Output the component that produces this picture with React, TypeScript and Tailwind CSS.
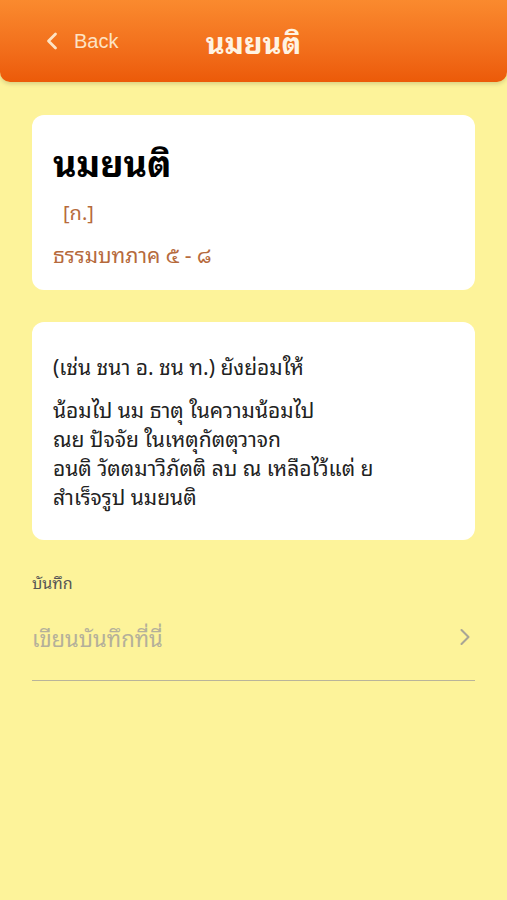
import { ChevronLeft, ChevronRight } from "lucide-react";

export default function App() {
  return (
    <div
      className="min-h-[900px] w-full bg-[#fdf39a] text-black"
      style={{
        fontFamily:
          '"Noto Sans Thai Looped", "Loma", "Garuda", "Tlwg Typo", "Norasi", "Noto Sans Thai", "Noto Sans", sans-serif',
      }}
    >
      {/* Header */}
      <div className="relative flex h-[82px] items-center rounded-b-[10px] bg-gradient-to-b from-[#fa8a2e] to-[#ec5a08] shadow-[0_2px_4px_rgba(0,0,0,0.15)]">
        <div className="absolute left-[38px] top-[26px] flex items-center gap-[8px] text-[#fde3c4]">
          <ChevronLeft size={28} strokeWidth={2.4} />
          <span className="text-[20px]" style={{ fontFamily: '"Liberation Sans", sans-serif' }}>Back</span>
        </div>
        <div className="w-full pt-[2px] text-center text-[29px] font-bold text-[#fff3e2]">นมยนติ</div>
      </div>

      <div className="flex flex-col px-[32px] pt-[33px]">
        {/* Word card */}
        <div className="flex h-[175px] flex-col rounded-[12px] bg-white px-[21px] pt-[21px]">
          <div className="text-[36px] font-bold leading-[50px]">นมยนติ</div>
          <div className="mt-[11px] pl-[10px] text-[20px] leading-[28px] text-[#b66a3c]">[ก.]</div>
          <div className="mt-[14px] text-[21px] leading-[30px] text-[#b66a3c]">ธรรมบทภาค ๕ - ๘</div>
        </div>

        {/* Meaning card */}
        <div className="mt-[32px] flex h-[218px] flex-col rounded-[12px] bg-white px-[21px] pt-[29px] text-[21px] leading-[29px] text-[#222]">
          <div>(เช่น ชนา อ. ชน ท.) ยังย่อมให้</div>
          <div className="mt-[14px]">
            <div>น้อมไป นม ธาตุ ในความน้อมไป</div>
            <div>ณย ปัจจัย ในเหตุกัตตุวาจก</div>
            <div>อนติ วัตตมาวิภัตติ ลบ ณ เหลือไว้แต่ ย</div>
            <div>สำเร็จรูป นมยนติ</div>
          </div>
        </div>

        {/* Note */}
        <div className="mt-[30px] text-[16px] leading-[24px] text-[#555]">บันทึก</div>
        <div className="mt-[28px] flex items-center justify-between border-b border-[#b9b49a] pb-[28px]">
          <span className="text-[22px] leading-[30px] text-[#b4b09a]">เขียนบันทึกที่นี่</span>
          <ChevronRight size={28} strokeWidth={1.8} className="mr-[-4px] text-[#a8a595]" />
        </div>
      </div>
    </div>
  );
}
